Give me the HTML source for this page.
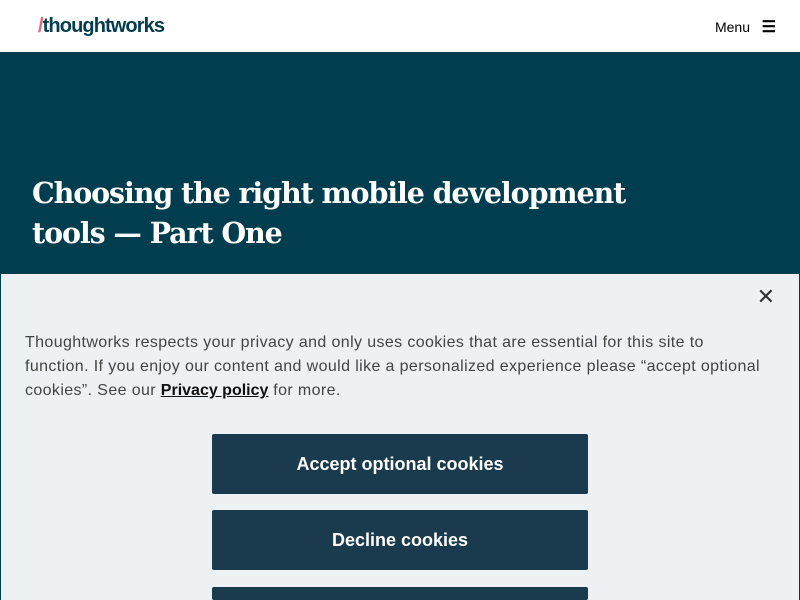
<!DOCTYPE html>
<html><head><meta charset="utf-8"><style>
*{margin:0;padding:0;box-sizing:border-box}
html,body{width:800px;height:600px;overflow:hidden}
body{font-family:"Liberation Sans",sans-serif;background:#fff;position:relative}
.hdr{height:52px;background:#fff;position:relative}
.logo{position:absolute;left:38px;top:15px;font-size:20px;color:#003d4f;letter-spacing:-0.9px;font-weight:bold}
.logo span{color:#e16a7c;font-weight:bold}
.menu{position:absolute;right:24px;top:17px;font-size:14px;color:#000}
.hero{position:absolute;top:52px;left:0;width:800px;height:222px;background:#003d4f}
.hero h1{position:absolute;left:32px;top:121px;font-family:"DejaVu Serif","Liberation Serif",serif;color:#fff;font-size:28.5px;line-height:40px;font-weight:bold;letter-spacing:-1.1px;width:640px}
.ban{position:absolute;top:273px;left:0;width:800px;height:327px;background:#edf1f4;border:1px solid #003d4f;border-bottom:none;overflow:hidden}
.x{position:absolute;right:24px;top:10px;font-size:22px;color:#333}
.txt{position:absolute;left:24px;top:57px;width:770px;font-size:16px;line-height:24px;color:#444;white-space:nowrap;letter-spacing:0.38px}
.txt b{color:#111;text-decoration:underline;letter-spacing:0}
.btn{position:absolute;left:211px;width:376px;height:60px;background:#193b4d;border-radius:2px;color:#fff;font-weight:bold;font-size:18px;text-align:center;line-height:60px}
</style></head><body>
<div class="hdr"><div class="logo"><span>/</span>thoughtworks</div>
<div class="menu">Menu &nbsp;&nbsp;<b style="font-size:16px">☰</b></div></div>
<div class="hero"><h1>Choosing the right mobile development tools — Part One</h1></div>
<div class="ban">
<div class="x">✕</div>
<div class="txt">Thoughtworks respects your privacy and only uses cookies that are essential for this site to<br>function. If you enjoy our content and would like a personalized experience please “accept optional<br>cookies”. See our <b>Privacy policy</b> for more.</div>
<div class="btn" style="top:160px">Accept optional cookies</div>
<div class="btn" style="top:236px">Decline cookies</div>
<div class="btn" style="top:313px;height:13px"></div>
</div>
</body></html>
